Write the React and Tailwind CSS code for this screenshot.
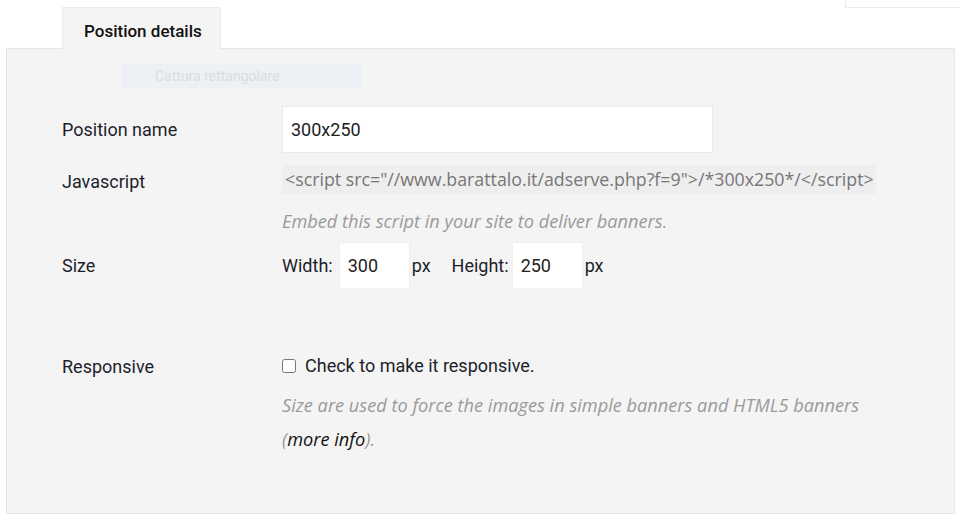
import React from "react";

const font = { fontFamily: "Roboto, 'Open Sans', sans-serif" };
const alt = { fontFamily: "'Open Sans', Roboto, sans-serif" };

const Label = ({ children, className = "" }) => (
  <div className={`w-[220px] shrink-0 text-[18px] text-[#1c1f2b] ${className}`}>{children}</div>
);

export default function App() {
  return (
    <div className="relative h-[520px] w-[960px] overflow-hidden bg-white" style={font}>
      {/* top right leftover box */}
      <div className="absolute right-0 top-0 h-[8px] w-[115px] border-b border-l border-[#ebebeb] bg-white" />

      {/* tab */}
      <div className="flex h-[48px] items-end pl-[62px] pt-[7px]">
        <div className="relative z-10 -mb-px flex h-[42px] w-[159px] items-center border border-b-0 border-[#ebebeb] bg-[#f4f4f4] pl-[21px] pt-[6px] text-[17px] font-medium text-[#111]">
          Position details
        </div>
      </div>

      {/* panel */}
      <div className="ml-[6px] h-[466px] w-[949px] border border-[#e6e6e6] bg-[#f4f4f4] pl-[55px] pt-[15px]">
        <div className="ml-[59px] flex h-[24px] w-[241px] items-center bg-[#edf0f4] pl-[34px] text-[14px] text-[#d9dde3]">
          Cattura rettangolare
        </div>

        {/* Position name */}
        <div className="mt-[18px] flex items-center">
          <Label>Position name</Label>
          <input
            readOnly
            value="300x250"
            className="h-[47px] w-[431px] border border-[#e9e9e9] bg-white px-[8px] text-[18px] text-[#222] outline-none"
          />
        </div>

        {/* Javascript */}
        <div className="mt-[12px] flex">
          <Label className="pt-[3px]">Javascript</Label>
          <div>
            <div
              className="flex h-[29px] w-[594px] items-center whitespace-nowrap bg-[#eeeeee] pl-[3px] text-[17.8px] text-[#777]"
              style={alt}
            >
              {'<script src="//www.barattalo.it/adserve.php?f=9">/*300x250*/</script>'}
            </div>
            <div className="mt-[14px] text-[18.2px] italic leading-[26px] text-[#9a9a9a]" style={alt}>
              Embed this script in your site to deliver banners.
            </div>
          </div>
        </div>

        {/* Size */}
        <div className="mt-[8px] flex items-center">
          <Label>Size</Label>
          <div className="flex items-center text-[18px] text-[#1c1f2b]">
            <span>Width:</span>
            <input
              readOnly
              value="300"
              className="ml-[6px] h-[47px] w-[71px] border border-[#f0f0f0] bg-white px-[8px] text-[18px] text-[#222] outline-none"
            />
            <span className="ml-[2px]">px</span>
            <span className="ml-[21px]">Height:</span>
            <input
              readOnly
              value="250"
              className="ml-[3px] h-[47px] w-[71px] border border-[#f0f0f0] bg-white px-[8px] text-[18px] text-[#222] outline-none"
            />
            <span className="ml-[2px]">px</span>
          </div>
        </div>

        {/* Responsive */}
        <div className="mt-[63px] flex">
          <Label className="pt-[1px]">Responsive</Label>
          <div>
            <label className="flex items-center text-[18px] text-[#1c1f2b]">
              <input type="checkbox" className="m-0 h-[14px] w-[14px]" />
              <span className="ml-[9px]">Check to make it responsive.</span>
            </label>
            <div className="mt-[9px] w-[594px] text-[18.2px] italic leading-[34px] text-[#9a9a9a]" style={alt}>
              Size are used to force the images in simple banners and HTML5 banners{" "}
              <span className="whitespace-nowrap">
                (<a href="#" className="text-[#111]">more info</a>).
              </span>
            </div>
          </div>
        </div>
      </div>
    </div>
  );
}
